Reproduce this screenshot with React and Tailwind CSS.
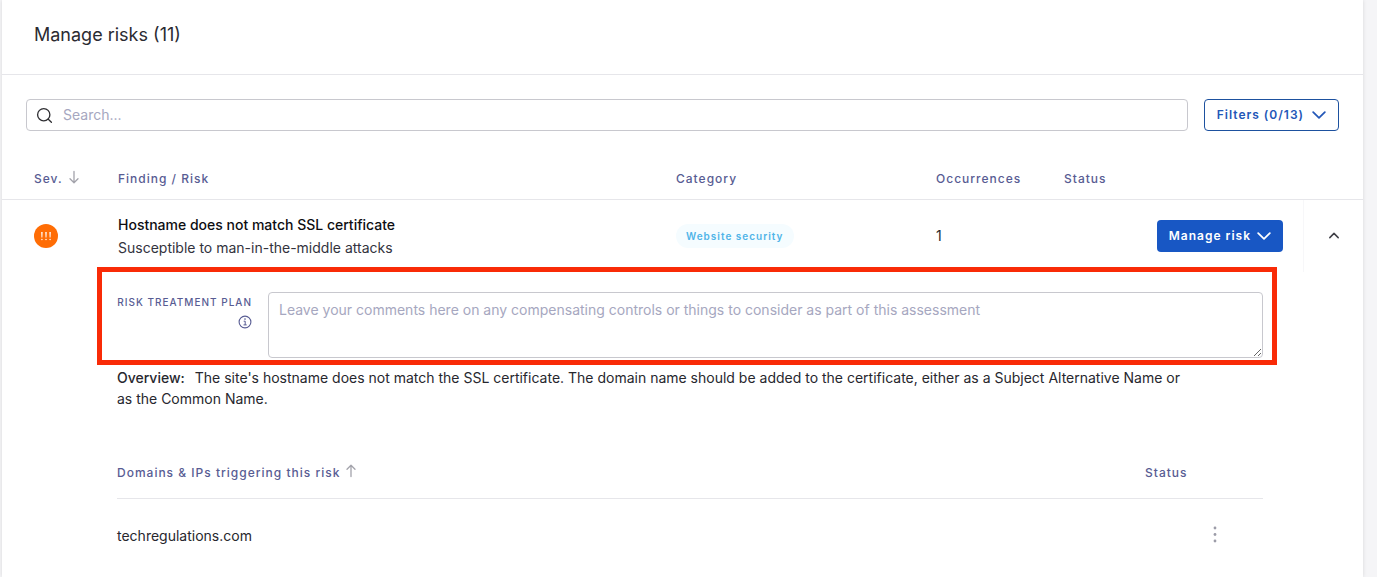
import { useState } from 'react'

const domains = ['techregulations.com']

function Chevron({ up, className }) {
  return (
    <svg viewBox="0 0 12 12" fill="none" stroke="currentColor" strokeWidth="1.5" strokeLinecap="round" strokeLinejoin="round" className={className} aria-hidden="true">
      <path d={up ? 'M1.8 7.6 6 3.4l4.2 4.2' : 'M1 3.6 6 8.4l5-4.8'} />
    </svg>
  )
}

function SortArrow({ up }) {
  return (
    <svg viewBox="0 0 10 14" fill="none" stroke="#a3a3ab" strokeWidth="1.3" strokeLinecap="round" strokeLinejoin="round" className="w-[10px] h-[14px] shrink-0 mb-1" aria-hidden="true">
      <path d={up ? 'M5 12.5V1.5M1 5.3 5 1.3l4 4' : 'M5 1.5v11M1 8.7l4 4 4-4'} />
    </svg>
  )
}

function SeverityBadge() {
  return (
    <svg viewBox="0 0 24 24" className="w-6 h-6" role="img" aria-label="High severity">
      <circle cx="12" cy="12" r="12" fill="#ff6d05" />
      <g fill="#fff" fillOpacity=".9">
        <path d="M7.1 8h1.6l-.3 5.6h-1zM11.2 8h1.6l-.3 5.6h-1zM15.3 8h1.6l-.3 5.6h-1z" />
        <circle cx="7.9" cy="15.5" r=".8" />
        <circle cx="12" cy="15.5" r=".8" />
        <circle cx="16.1" cy="15.5" r=".8" />
      </g>
    </svg>
  )
}

function RiskDetails() {
  return (
    <div className="relative pl-[115px] pr-[100px] pt-5 pb-1">
      <div className="absolute left-[95px] right-[86px] -top-[5px] h-[98px] border-5 border-[#f92b07] pointer-events-none" />

      <div className="flex gap-4">
        <label htmlFor="plan" className="w-[135px] shrink-0 flex flex-col items-end text-[10px] leading-5 font-medium tracking-[1px] text-[#585c93] whitespace-nowrap">
          RISK TREATMENT PLAN
          <svg viewBox="0 0 14 14" fill="none" stroke="currentColor" className="w-[14px] h-[14px] mt-[3px]" aria-hidden="true">
            <circle cx="7" cy="7" r="5.9" strokeWidth="1.1" />
            <path d="M5.7 6.2H7.2V9.9M5.5 9.9h3.2" strokeWidth="1" />
            <circle cx="7" cy="4.1" r=".8" fill="currentColor" stroke="none" />
          </svg>
        </label>
        <textarea
          id="plan"
          placeholder="Leave your comments here on any compensating controls or things to consider as part of this assessment"
          className="flex-1 min-w-0 h-[66px] px-[10px] py-[7px] text-sm leading-5 border border-[#c8c8ce] rounded placeholder:text-[#a6a7c0] outline-none"
        />
      </div>

      <p className="mt-[9px] pr-16 text-sm leading-[21px] text-[#27272e]">
        <span className="font-medium mr-[10px]">Overview:</span>
        The site's hostname does not match the SSL certificate. The domain name should be added to the certificate, either as a Subject Alternative Name or as the Common Name.
      </p>

      <table className="w-full mt-[39px] table-fixed border-separate border-spacing-0 text-left">
        <thead className="text-xs text-[#585c93]">
          <tr>
            <th className="h-[51px] p-0 border-b border-[#e6e6ea] font-medium tracking-[1px]">
              <span className="flex items-center gap-[6px]">Domains &amp; IPs triggering this risk <SortArrow up /></span>
            </th>
            <th className="w-[118px] p-0 border-b border-[#e6e6ea] font-medium tracking-[1px]">Status</th>
          </tr>
        </thead>
        <tbody className="text-sm text-[#27272e]">
          {domains.map(domain => (
            <tr key={domain}>
              <td className="h-[74px] p-0">{domain}</td>
              <td className="p-0">
                <button className="block w-5 h-6 ml-[60px]" aria-label="More actions">
                  <svg viewBox="0 0 20 24" fill="#9c9ca8" className="w-5 h-6">
                    <circle cx="10" cy="4" r="1.4" />
                    <circle cx="10" cy="10.5" r="1.4" />
                    <circle cx="10" cy="17" r="1.4" />
                  </svg>
                </button>
              </td>
            </tr>
          ))}
        </tbody>
      </table>
    </div>
  )
}

export default function App() {
  const [open, setOpen] = useState(true)
  const th = 'p-0 pl-4 border-b border-[#e6e6ea] font-medium tracking-[1px]'

  return (
    <div className="min-h-screen flex bg-[#f5f5f7] pl-[2px] pr-[14px] font-['Inter',sans-serif]">
      <main className="flex-1 min-w-0 bg-white shadow-[0_0_4px_rgba(0,0,0,0.12)]">
        <header className="h-[75px] px-8 pb-[5px] flex items-center border-b border-[#e6e6ea]">
          <h1 className="text-lg text-[#2b2b31]">Manage risks (11)</h1>
        </header>

        <div className="flex gap-4 px-6 pt-6">
          <div className="flex-1 h-8 flex items-center gap-[10px] px-[9px] border border-[#c8c8ce] rounded">
            <svg viewBox="0 0 18 18" fill="none" stroke="#2f2f33" strokeWidth="1.4" strokeLinecap="round" className="w-[17px] h-[17px]" aria-hidden="true">
              <circle cx="8.2" cy="8.2" r="6.5" />
              <path d="m13 13 3.3 3.2" />
            </svg>
            <input type="text" aria-label="Search" placeholder="Search..." className="flex-1 min-w-0 text-sm placeholder:text-[#a6a7c0] outline-none" />
          </div>
          <button className="h-8 px-3 flex items-center gap-2 border border-[#1d519f] rounded text-xs font-semibold tracking-[1px] text-[#2357b8]">
            Filters (0/13) <Chevron className="w-[14px] h-[14px]" />
          </button>
        </div>

        <table className="w-full mt-[27px] table-fixed border-separate border-spacing-0 text-left">
          <thead className="text-xs text-[#585c93]">
            <tr>
              <th className="w-[100px] h-[42px] p-0 pl-8 border-b border-[#e6e6ea] font-medium tracking-[1px]">
                <span className="flex items-center gap-[6px]">Sev. <SortArrow /></span>
              </th>
              <th className={th}>Finding / Risk</th>
              <th className={`${th} w-[260px]`}>Category</th>
              <th className={`${th} w-[128px]`}>Occurrences</th>
              <th className={`${th} w-[90px]`}>Status</th>
              <th className={`${th} w-[165px]`} aria-label="Actions" />
              <th className={`${th} w-[60px]`} aria-label="Expand" />
            </tr>
          </thead>
          <tbody className="text-sm text-[#27272e]">
            <tr>
              <td className="h-[72px] p-0 pl-8"><SeverityBadge /></td>
              <td className="p-0 pl-4">
                <p className="leading-[23px] font-medium text-[#0e0e12]">Hostname does not match SSL certificate</p>
                <p className="leading-[23px] text-[#33333d]">Susceptible to man-in-the-middle attacks</p>
              </td>
              <td className="p-0 pl-4">
                <span className="inline-block px-[10px] rounded-full bg-[#f5fcff] text-[10px] leading-6 font-semibold tracking-[1px] text-[#4fb4e8]">Website security</span>
              </td>
              <td className="p-0 pl-4">1</td>
              <td />
              <td className="p-0 pr-5">
                <button className="ml-auto h-8 px-3 flex items-center gap-[6px] rounded bg-[#1857c4] text-xs font-semibold tracking-[1px] text-white whitespace-nowrap">
                  Manage risk <Chevron className="w-[14px] h-[14px]" />
                </button>
              </td>
              <td className="p-0 border-l border-[#f7f7f9]">
                <button onClick={() => setOpen(!open)} aria-expanded={open} aria-label="Toggle details" className="mx-auto w-6 h-6 flex items-center justify-center text-[#3f3f46]">
                  <Chevron up={open} className="w-3 h-3" />
                </button>
              </td>
            </tr>
            {open && (
              <tr>
                <td colSpan={7} className="p-0"><RiskDetails /></td>
              </tr>
            )}
          </tbody>
        </table>
      </main>
    </div>
  )
}
